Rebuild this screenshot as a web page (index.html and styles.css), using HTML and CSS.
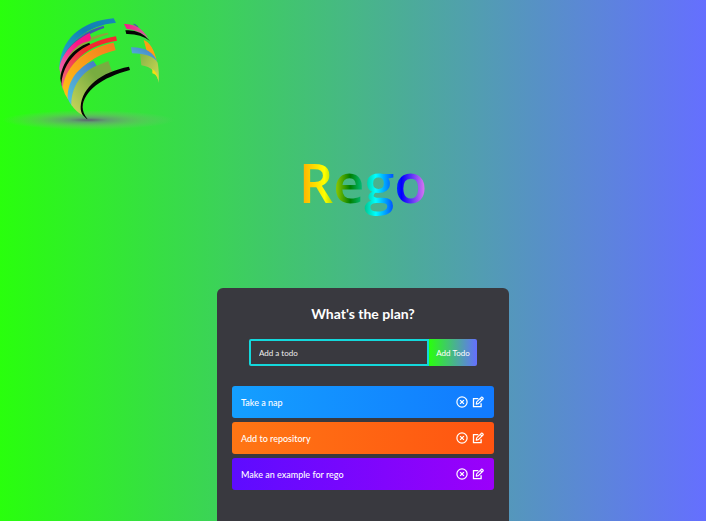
FILE: index.html
```html
<!DOCTYPE html>
<html lang="en">
<head>
<meta charset="utf-8">
<meta name="viewport" content="width=device-width, initial-scale=1">
<title>Rego</title>
<link rel="stylesheet" href="styles.css">
</head>
<body>
<svg width="0" height="0" class="sprite" aria-hidden="true">
  <symbol id="close" viewBox="0 0 12 12">
    <circle cx="6" cy="6" r="5.1" fill="none" stroke="currentColor" stroke-width="1.2"/>
    <path d="M4.1 4.1l3.8 3.8M7.9 4.1L4.1 7.9" fill="none" stroke="currentColor" stroke-width="1.3"/>
  </symbol>
  <symbol id="edit" viewBox="0 0 12 12">
    <path d="M6.3 2.7H1.5v8h7.6V7.2" fill="none" stroke="currentColor" stroke-width="1.3"/>
    <path d="M4.2 8.1l.5-2.3 4.6-4.5q.5-.4 1 0l.7.7q.5.5 0 1L6.4 7.6zM8.4 2.3l1.7 1.7" fill="none" stroke="currentColor" stroke-width="1.1" stroke-linejoin="round"/>
  </symbol>
</svg>
<header>
  <svg class="logo" viewBox="0 0 600 420" role="img" aria-label="Rego logo">
    <defs>
      <radialGradient id="shadow"><stop offset="0" stop-color="#5d5f70"/><stop offset=".22" stop-color="#669377" stop-opacity=".85"/><stop offset=".6" stop-color="#7ba978" stop-opacity=".4"/><stop offset="1" stop-color="#87b887" stop-opacity="0"/></radialGradient>
      <linearGradient id="teal" x1="0" y1="1" x2="1" y2="0"><stop stop-color="#24b9c5"/><stop offset=".6" stop-color="#127fb5"/><stop offset="1" stop-color="#1688b8"/></linearGradient>
      <linearGradient id="pink" x1="0" y1="1" x2="1" y2="0"><stop stop-color="#ea70b0"/><stop offset=".65" stop-color="#fa1588"/></linearGradient>
      <linearGradient id="pink-tip"><stop stop-color="#fa1588"/><stop offset="1" stop-color="#c86a9c"/></linearGradient>
      <linearGradient id="red" x1="0" y1="1" x2="1" y2="0"><stop stop-color="#f36a89"/><stop offset=".6" stop-color="#f32830"/></linearGradient>
      <linearGradient id="orange" x1="0" y1="1" x2="1" y2="0"><stop stop-color="#ffc414"/><stop offset="1" stop-color="#f47920"/></linearGradient>
      <linearGradient id="sky" x1="0" y1="1" x2="1" y2="0"><stop stop-color="#55c2de"/><stop offset="1" stop-color="#4679c6"/></linearGradient>
      <linearGradient id="olive" x1="0" y1="1" x2="1" y2="0"><stop stop-color="#ced75d"/><stop offset=".65" stop-color="#78ad40"/></linearGradient>
      <linearGradient id="lime" x1="0" y1="0" x2="1" y2="1"><stop stop-color="#86b447"/><stop offset="1" stop-color="#d2d954"/></linearGradient>
    </defs>
    <ellipse cx="265" cy="360" rx="258" ry="29" fill="url(#shadow)"/>
    <path d="M178 211C177 119 246 62 341 55L348 68C263 76 201 124 178 211Z" fill="url(#teal)"/>
    <path d="M190 168C218 121 258 90 311 77L313 84C261 101 220 130 190 168Z" fill="#4258ad"/>
    <path d="M178 205C185 158 224 121 269 99L275 121C231 138 203 174 183 230Z" fill="url(#pink)"/>
    <path d="M181 226C200 164 232 128 268 124L274 112C291 104 310 101 323 98L326 103C257 122 202 158 182 242Z" fill="#8fa33c"/>
    <path d="M181 236C186 188 216 146 268 128L272 138C220 158 196 196 185 258Z" fill="#050505"/>
    <path d="M184 252C192 165 264 124 348 109L351 122C264 135 202 184 190 272Z" fill="url(#red)"/>
    <path d="M188 262C200 188 263 144 341 128L347 151C272 168 211 219 205 299Q192 282 188 262Z" fill="url(#orange)"/>
    <path d="M203 295C202 239 237 200 280 182L290 197C247 219 213 259 216 318Q207 307 203 295Z" fill="url(#sky)"/>
    <path d="M214 314C214 260 244 216 290 197L325 183L337 218C284 242 242 282 248 346Q226 333 214 314Z" fill="url(#olive)"/>
    <path d="M263 358C252 350 241 341 242 320C246 260 304 216 387 200L390 210C306 232 250 273 248 322Q248 341 263 358Z" fill="#050505"/>
    <path d="M398 71L405 72L413 78L416 85Z" fill="#4258ad"/>
    <path d="M372 72Q418 70 445 115Q415 89 380 87Z" fill="url(#pink-tip)"/>
    <path d="M376 91Q421 87 450 123Q422 101 379 102Z" fill="#050505"/>
    <path d="M431 120Q458 130 470 182Q456 158 440 152Z" fill="#ff9e13"/>
    <path d="M420 161Q463 161 473 188Q478 214 476 248Q468 201 424 196Z" fill="url(#lime)"/>
    <path d="M393 142Q456 141 472 187Q458 161 396 160Z" fill="url(#sky)"/>
    <path d="M457 207Q472 215 475 241Q469 222 457 220Z" fill="#f4df13"/>
  </svg>
</header>
<main>
  <h1>Rego</h1>
  <section class="todo-app">
    <h2>What's the plan?</h2>
    <form class="todo-form">
      <input type="text" placeholder="Add a todo" aria-label="Add a todo">
      <button type="submit">Add Todo</button>
    </form>
    <ul>
      <li class="blue"><span>Take a nap</span>
        <button type="button" aria-label="Delete"><svg><use href="#close"/></svg></button>
        <button type="button" aria-label="Edit"><svg><use href="#edit"/></svg></button></li>
      <li class="orange"><span>Add to repository</span>
        <button type="button" aria-label="Delete"><svg><use href="#close"/></svg></button>
        <button type="button" aria-label="Edit"><svg><use href="#edit"/></svg></button></li>
      <li class="purple"><span>Make an example for rego</span>
        <button type="button" aria-label="Delete"><svg><use href="#close"/></svg></button>
        <button type="button" aria-label="Edit"><svg><use href="#edit"/></svg></button></li>
    </ul>
  </section>
</main>
</body>
</html>
```
FILE: styles.css
```css
* { box-sizing: border-box; }

body {
  margin: 0;
  min-height: 100vh;
  display: flex;
  flex-direction: column;
  font-family: "Trebuchet MS", Lato, sans-serif;
  color: #fff;
  background: linear-gradient(90deg, #29ff0d, #656fff);
}

.sprite { position: absolute; }

.logo {
  display: block;
  width: 200px;
  height: 140px;
}

main {
  flex: 1;
  display: flex;
  flex-direction: column;
  align-items: center;
  padding-left: 20px;
}

h1 {
  margin: 2px 0 66px;
  font-family: "Trebuchet MS", "Open Sans", sans-serif;
  font-size: 54px;
  line-height: 80px;
  font-weight: 600;
  color: transparent;
  background: linear-gradient(90deg, orange, yellow, green, cyan, blue, violet);
  background-clip: text;
}

.todo-app {
  flex: 1;
  width: 100%;
  max-width: 292px;
  padding: 16px 15px 28px;
  border-radius: 6px 6px 0 0;
  background: #39393f;
}

h2 {
  margin: 0 0 15px;
  font-size: 14px;
  line-height: 20px;
  font-weight: 700;
  text-align: center;
}

.todo-form {
  display: flex;
  margin: 0 17px 20px;
}

.todo-form input {
  flex: 1;
  min-width: 0;
  height: 27px;
  padding: 0 8px;
  border: 2px solid #14d8dc;
  border-radius: 2px 0 0 2px;
  background: transparent;
  color: #fff;
  font: 8px "Trebuchet MS", Lato, sans-serif;
}

.todo-form input::placeholder { color: #eee; }

.todo-form button {
  width: 48px;
  padding: 0;
  border: 0;
  border-radius: 0 2px 2px 0;
  color: #fff;
  font: 8px "Trebuchet MS", Lato, sans-serif;
  background: linear-gradient(90deg, #29ff0d, #656fff);
}

ul {
  margin: 0;
  padding: 0;
  list-style: none;
  display: grid;
  gap: 4px;
}

li {
  display: flex;
  align-items: center;
  gap: 4px;
  height: 32px;
  padding: 0 10px 0 9px;
  border-radius: 3px;
  font-size: 9px;
  font-weight: 500;
}

li span { flex: 1; }

li button {
  display: flex;
  padding: 0;
  border: 0;
  background: none;
  color: #fff;
}

li svg {
  width: 12px;
  height: 12px;
}

.blue { background: linear-gradient(90deg, #149fff, #117aff); }
.orange { background: linear-gradient(90deg, #ff7614, #ff5411); }
.purple { background: linear-gradient(90deg, #5d0cff, #9b00fa); }
```
